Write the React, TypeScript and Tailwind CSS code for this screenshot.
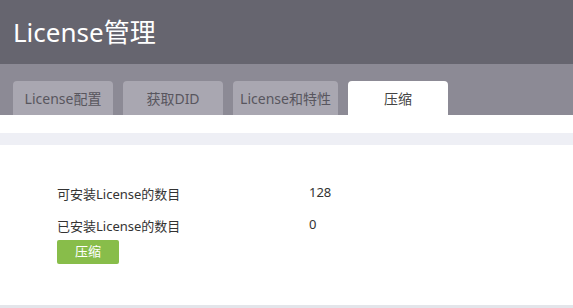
const font = { fontFamily: '"Noto Sans", "Noto Sans CJK SC", sans-serif' };

const tabs = [
  { label: 'License配置', w: 'w-[100px]' },
  { label: '获取DID', w: 'w-[100px]' },
  { label: 'License和特性', w: 'w-[105px]' },
  { label: '压缩', w: 'w-[100px]', active: true },
];

export default function App() {
  return (
    <div className="w-[573px] h-[308px] bg-white flex flex-col overflow-hidden" style={font}>
      {/* Header */}
      <div className="h-[64px] bg-[#66656f] flex items-center px-[13px]">
        <h1 className="text-[26px] text-white leading-none pb-[1px]">License管理</h1>
      </div>

      {/* Tabs */}
      <div className="h-[51px] bg-[#8c8a95] flex items-end gap-[10px] px-[13px]">
        {tabs.map((t) => (
          <div
            key={t.label}
            className={`${t.w} h-[34px] rounded-t-[4px] flex items-center justify-center text-[14px] ${
              t.active ? 'bg-white text-[#444]' : 'bg-[#a9a7b1] text-[#58565e]'
            }`}
          >
            {t.label}
          </div>
        ))}
      </div>

      <div className="h-[18px] bg-white" />
      <div className="h-[12px] bg-[#eeeff5]" />

      {/* Content */}
      <div className="flex-1 flex flex-col pt-[38px] pl-[57px] text-[13px] text-[#333]">
        <div className="flex h-[24px] items-center">
          <span className="w-[252px]">可安装License的数目</span>
          <span className="-mt-[4px]">128</span>
        </div>
        <div className="flex h-[24px] items-center mt-[8px]">
          <span className="w-[252px]">已安装License的数目</span>
          <span className="-mt-[4px]">0</span>
        </div>
        <button className="mt-[1px] w-[62px] h-[24px] rounded-[2px] bg-[#88bd4a] text-white text-[13px] flex items-center justify-center">
          压缩
        </button>
      </div>
      <div className="h-[3px] bg-[#e3e5ea]" />
    </div>
  );
}
